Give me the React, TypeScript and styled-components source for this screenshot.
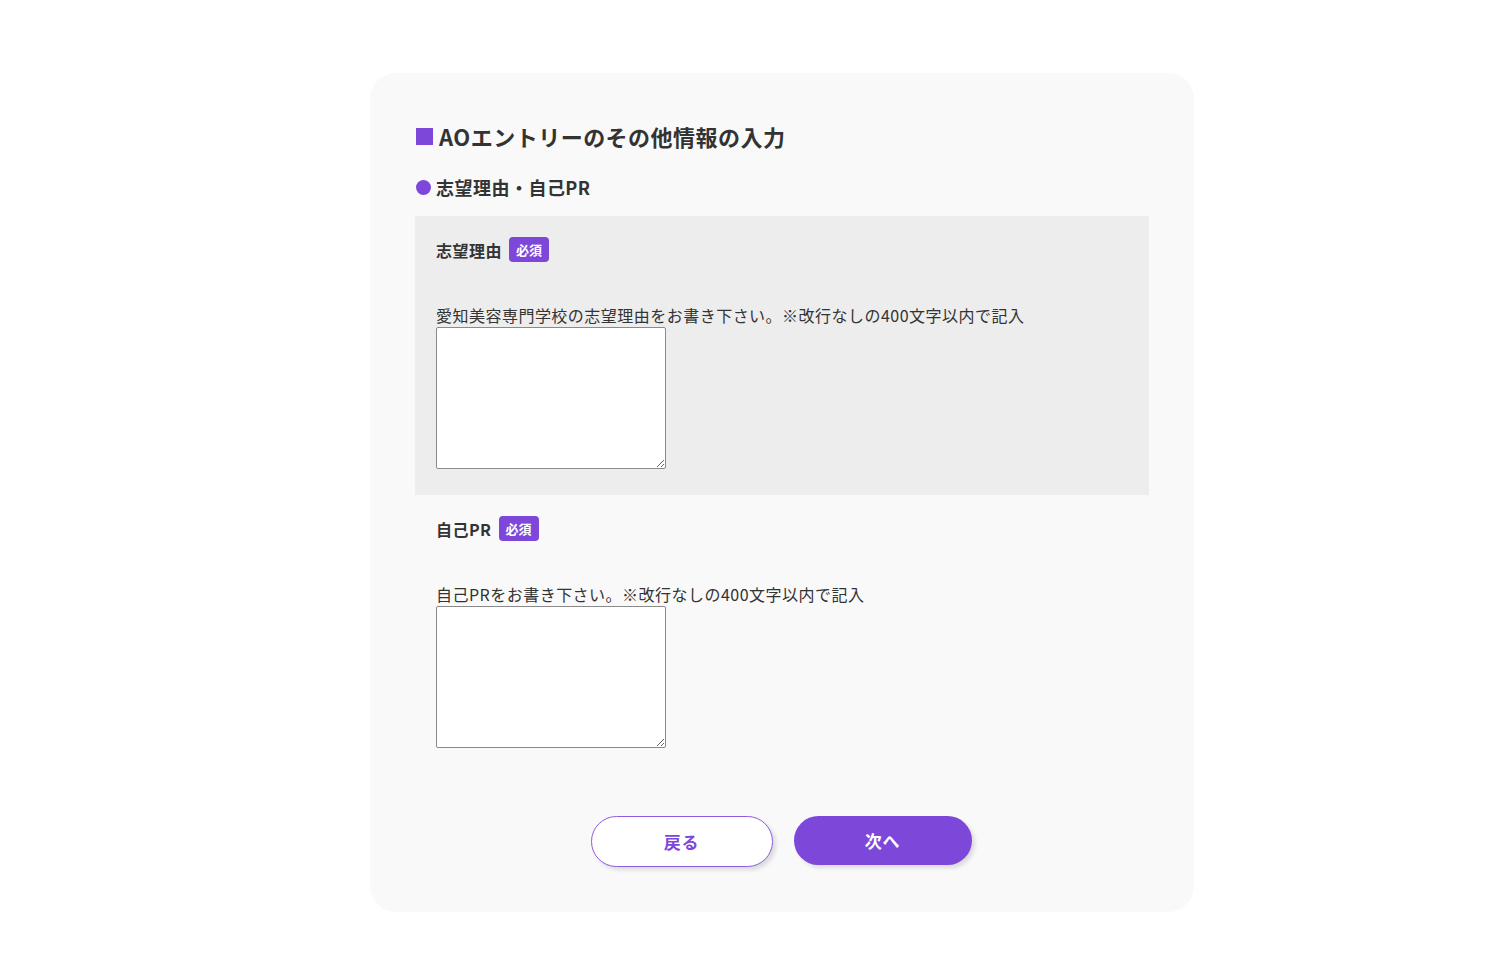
import React from "react";
import styled, { createGlobalStyle } from "styled-components";

const GlobalStyle = createGlobalStyle`
  html, body {
    margin: 0;
    padding: 0;
    background: #ffffff;
  }
  body {
    font-family: "Noto Sans CJK JP", "Noto Sans", sans-serif;
    color: #333333;
    letter-spacing: 0.03em;
  }
`;

const Page = styled.div`
  padding: 73px 0 60px 370px;
`;

const Card = styled.div`
  width: 824px;
  box-sizing: border-box;
  background: #f9f9f9;
  border-radius: 26px;
  padding: 47px 45px 45px;
`;

const Heading = styled.h2`
  margin: 0;
  display: flex;
  align-items: center;
  font-size: 22px;
  line-height: 33px;
  font-weight: 700;
  color: #333333;
`;

const Square = styled.span`
  width: 17px;
  height: 17px;
  background: #7d48d9;
  margin: 0 6px 0 1px;
`;

const SubHeading = styled.h3`
  margin: 21px 0 0;
  display: flex;
  align-items: center;
  font-size: 18px;
  line-height: 27px;
  font-weight: 700;
  color: #333333;
`;

const Dot = styled.span`
  width: 15px;
  height: 15px;
  border-radius: 50%;
  background: #7d48d9;
  margin: 0 5px 0 1px;
`;

const SectionWrap = styled.div`
  margin-top: 15px;
`;

const Section = styled.div<{ $shaded?: boolean }>`
  background: ${(p) => (p.$shaded ? "#ededed" : "transparent")};
  padding: ${(p) => (p.$shaded ? "21px 21px 26px" : "21px 21px 25px")};
`;

const LabelRow = styled.div`
  display: flex;
  align-items: center;
  height: 25px;
  gap: 7px;
`;

const Label = styled.span`
  font-size: 16px;
  font-weight: 700;
  color: #333333;
`;

const Badge = styled.span`
  display: inline-flex;
  align-items: center;
  justify-content: center;
  height: 25px;
  padding: 0 7px;
  border-radius: 4px;
  background: #7d48d9;
  color: #ffffff;
  font-size: 13px;
  font-weight: 700;
  letter-spacing: 0;
`;

const Description = styled.p`
  margin: 41px 0 0;
  font-size: 16px;
  line-height: 24px;
  color: #333333;
`;

const TextArea = styled.textarea`
  display: block;
  width: 230px;
  height: 142px;
  box-sizing: border-box;
  border: 1px solid #8a8a8a;
  border-radius: 2px;
  background: #ffffff;
  margin: 0;
`;

const Buttons = styled.div`
  display: flex;
  justify-content: center;
  gap: 21px;
  margin-top: 43px;
  padding-right: 2px;
`;

const Button = styled.button<{ $primary?: boolean }>`
  width: ${(p) => (p.$primary ? "178px" : "182px")};
  height: ${(p) => (p.$primary ? "49px" : "51px")};
  border-radius: 26px;
  border: ${(p) => (p.$primary ? "none" : "1.5px solid #8f5ce0")};
  background: ${(p) => (p.$primary ? "#7d48d9" : "#ffffff")};
  color: ${(p) => (p.$primary ? "#ffffff" : "#7d48d9")};
  font-family: "Noto Sans CJK JP", "Noto Sans", sans-serif;
  font-size: 17px;
  font-weight: 700;
  letter-spacing: 0.05em;
  box-shadow: 3px 3px 4px rgba(0, 0, 0, 0.12);
  cursor: pointer;
`;

const fields = [
  {
    label: "志望理由",
    text: "愛知美容専門学校の志望理由をお書き下さい。※改行なしの400文字以内で記入",
    shaded: true,
  },
  {
    label: "自己PR",
    text: "自己PRをお書き下さい。※改行なしの400文字以内で記入",
    shaded: false,
  },
];

export default function App() {
  return (
    <>
      <GlobalStyle />
      <Page>
        <Card>
          <Heading>
            <Square />
            AOエントリーのその他情報の入力
          </Heading>
          <SubHeading>
            <Dot />
            志望理由・自己PR
          </SubHeading>
          <SectionWrap>
            {fields.map((f) => (
              <Section key={f.label} $shaded={f.shaded}>
                <LabelRow>
                  <Label>{f.label}</Label>
                  <Badge>必須</Badge>
                </LabelRow>
                <Description>{f.text}</Description>
                <TextArea />
              </Section>
            ))}
          </SectionWrap>
          <Buttons>
            <Button>戻る</Button>
            <Button $primary>次へ</Button>
          </Buttons>
        </Card>
      </Page>
    </>
  );
}
